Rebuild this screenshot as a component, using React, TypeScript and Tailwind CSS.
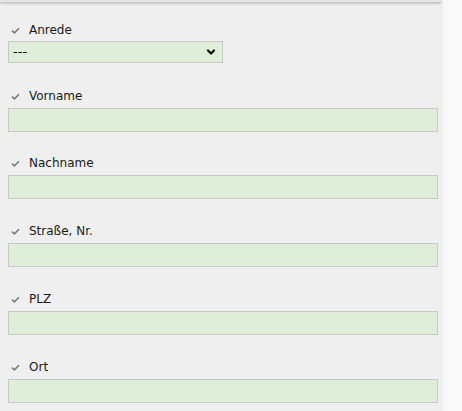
import { ChevronDown } from "lucide-react"

const fields = ["Vorname", "Nachname", "Straße, Nr.", "PLZ", "Ort"]

function Check() {
  return (
    <svg width="9" height="7" viewBox="0 0 9 7" className="shrink-0">
      <path d="M1 3.6 L3.4 5.8 L8 1.2" fill="none" stroke="#7a7a7a" strokeWidth="1.6" />
    </svg>
  )
}

function Label({ text }: { text: string }) {
  return (
    <div className="flex items-center h-4 pl-[3px]">
      <Check />
      <span className="ml-[9px] text-[12px] leading-4 text-[#1a1a1a]">{text}</span>
    </div>
  )
}

export default function App() {
  return (
    <div className="min-h-[411px] bg-[#f9f9f9] flex" style={{ fontFamily: '"DejaVu Sans", Verdana, sans-serif' }}>
      <div className="w-[443px] bg-[#efefef] relative">
        <div className="h-[2px] w-[441px] bg-[#e6e6e6] shadow-[0_1px_3px_rgba(0,0,0,0.35)]" />
        <div className="pl-2 pr-[5px] pt-5">
          <Label text="Anrede" />
          <div className="relative mt-[3px] w-[215px] h-[22px]">
            <select className="appearance-none block w-full h-full bg-[#dfeed9] border border-[#c8c8c8] pl-[4px] text-[13px] text-black outline-none">
              <option>---</option>
            </select>
            <ChevronDown className="absolute right-[6px] top-[5px] w-3 h-3 pointer-events-none" strokeWidth={4.5} color="#111" />
          </div>
          {fields.map((f, i) => (
            <div key={f} className={i === 0 ? "mt-[25px]" : i === 1 ? "mt-[23px]" : "mt-6"}>
              <Label text={f} />
              <div className="mt-1 w-[430px] h-6 bg-[#dfeed9] border border-[#c8c8c8]" />
            </div>
          ))}
        </div>
      </div>
    </div>
  )
}
